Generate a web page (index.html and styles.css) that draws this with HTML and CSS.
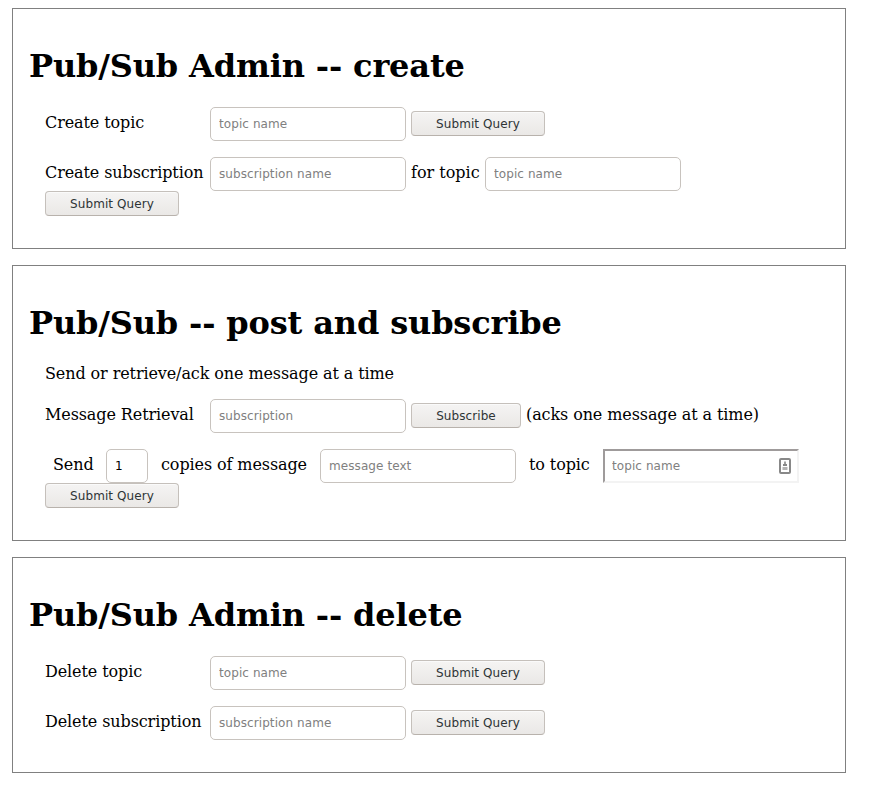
FILE: index.html
```html
<!DOCTYPE html>
<html lang="en">
<head>
<meta charset="utf-8">
<title>Pub/Sub Admin</title>
<link rel="stylesheet" href="styles.css">
</head>
<body>
<section class="panel">
  <h1>Pub/Sub Admin -- create</h1>
  <form class="row">
    <label class="name">Create topic</label>
    <input class="field" type="text" placeholder="topic name">
    <button class="btn" type="button">Submit Query</button>
  </form>
  <form class="row">
    <label class="name">Create subscription</label>
    <input class="field" type="text" placeholder="subscription name">
    <span class="for-topic">for topic</span>
    <input class="field" type="text" placeholder="topic name">
    <button class="btn wrapped" type="button">Submit Query</button>
  </form>
</section>
<section class="panel">
  <h1>Pub/Sub -- post and subscribe</h1>
  <p class="hint">Send or retrieve/ack one message at a time</p>
  <form class="row">
    <label class="name">Message Retrieval</label>
    <input class="field" type="text" placeholder="subscription">
    <button class="btn subscribe" type="button">Subscribe</button>
    <span class="note">(acks one message at a time)</span>
  </form>
  <form class="row">
    <span class="send">Send</span>
    <input class="field count" type="text" value="1">
    <span class="copies">copies of message</span>
    <input class="field" type="text" placeholder="message text">
    <span class="to-topic">to topic</span>
    <span class="picker">
      <input class="picker-input" type="text" placeholder="topic name">
      <svg class="picker-icon" width="12" height="16" viewBox="0 0 12 16">
        <rect x="1" y="1" width="10" height="14" rx="1" fill="#fff" stroke="#888" stroke-width="2"/>
        <path d="M6 3.5v4" stroke="#888" stroke-width="1.6"/>
        <path d="M4 6h4v2H4z" fill="#888"/>
        <path d="M3.5 9h5v3h-5z" fill="#b4b4b4"/>
      </svg>
    </span>
    <button class="btn wrapped" type="button">Submit Query</button>
  </form>
</section>
<section class="panel">
  <h1>Pub/Sub Admin -- delete</h1>
  <form class="row">
    <label class="name">Delete topic</label>
    <input class="field" type="text" placeholder="topic name">
    <button class="btn" type="button">Submit Query</button>
  </form>
  <form class="row">
    <label class="name">Delete subscription</label>
    <input class="field" type="text" placeholder="subscription name">
    <button class="btn" type="button">Submit Query</button>
  </form>
</section>
</body>
</html>
```
FILE: styles.css
```css
* {
  box-sizing: border-box;
}

body {
  margin: 8px 12px;
  background: #fff;
  color: #000;
  font: 16px/19px "DejaVu Serif", serif;
  letter-spacing: -0.1px;
}

.panel {
  width: 834px;
  margin-bottom: 16px;
  padding: 16px 16px 32px;
  border: 1px solid #808080;
}

h1 {
  height: 38px;
  margin: 22px 0;
  font-size: 32px;
  line-height: 38px;
  letter-spacing: -0.15px;
  white-space: nowrap;
}

.hint {
  margin: 0 16px 16px;
}

.row {
  display: flex;
  flex-wrap: wrap;
  align-items: flex-start;
  margin: 0 16px;
}

.row + .row {
  margin-top: 16px;
}

.row > label,
.row > span {
  line-height: 31px;
  white-space: nowrap;
}

.name {
  width: 165px;
}

.field,
.picker-input,
.btn {
  font: 12px "DejaVu Sans", sans-serif;
  letter-spacing: 0.08px;
}

.field {
  width: 196px;
  height: 34px;
  margin: 0;
  padding: 0 8px;
  border: 1px solid #c8c3be;
  border-radius: 5px;
  background: #fff;
  color: #000;
}

::placeholder {
  color: #808080;
  opacity: 1;
}

.btn {
  width: 134px;
  height: 25px;
  margin: 4px 0 0 5px;
  padding: 0;
  border: 1px solid #c5c0bb;
  border-bottom-color: #b8b2ac;
  border-radius: 4px;
  background: linear-gradient(#f5f4f3, #eae8e6);
  box-shadow: inset 0 1px #fafafa;
  color: #2e3436;
}

.btn.wrapped {
  margin: 0 600px 0 0;
}

.btn.subscribe {
  width: 110px;
}

.for-topic {
  width: 79px;
  padding-left: 5px;
  letter-spacing: 0;
}

.note {
  padding-left: 5px;
}

.send {
  width: 61px;
  padding-left: 8px;
}

.field.count {
  width: 42px;
}

.copies {
  width: 172px;
  padding-left: 13px;
}

.to-topic {
  width: 87px;
  padding-left: 13px;
}

.picker {
  position: relative;
  width: 196px;
  height: 34px;
}

.picker-input {
  display: block;
  width: 196px;
  height: 34px;
  margin: 0;
  padding: 0 7px;
  border: 2px solid;
  border-color: #9f9b9b #f3f3f3 #f3f3f3 #9f9b9b;
  background: #fff;
}

.picker-icon {
  position: absolute;
  top: 9px;
  right: 8px;
}
```
